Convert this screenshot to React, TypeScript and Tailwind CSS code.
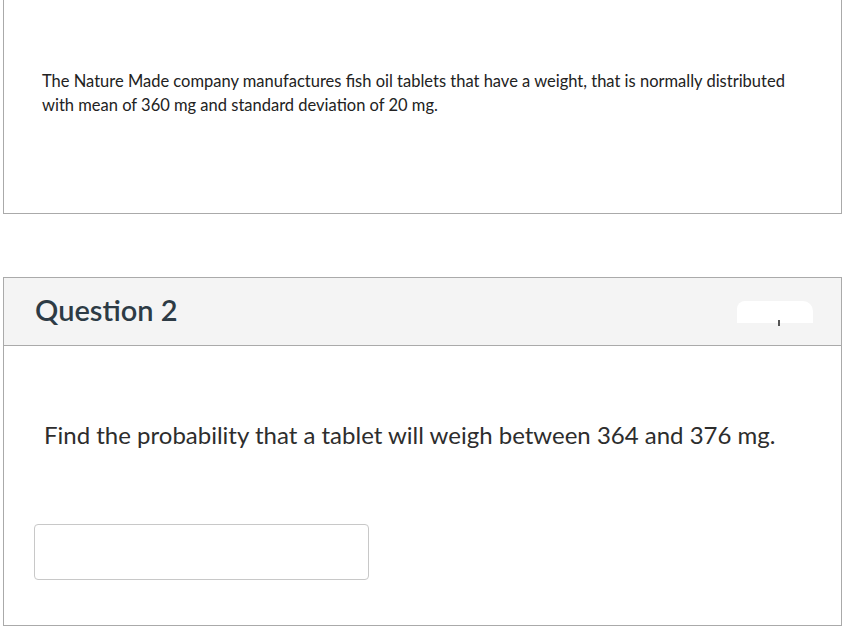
export default function App() {
  return (
    <div className="min-h-[634px] bg-white pl-[3px] pr-[2px] font-['Lato','Open_Sans',sans-serif]">
      {/* previous question body (top cut off) */}
      <div className="h-[214px] border-x border-b border-[#aaaaaa] pl-[38px] pr-[20px] pt-[69px]">
        <p className="whitespace-nowrap text-[16.5px] leading-[24px] text-[#222]">
          The Nature Made company manufactures fish oil tablets that have a weight, that is normally distributed
          <br />
          with mean of 360 mg and standard deviation of 20 mg.
        </p>
      </div>

      <div className="mt-[63px] h-[349px] border border-[#aaaaaa]">
        <div className="flex h-[68px] items-center justify-between border-b border-[#aaaaaa] bg-[#f4f4f4] pb-[4px] pl-[31px] pr-[28px]">
          <h2 className="text-[29px] font-semibold leading-none text-[#2d3b45]">Question 2</h2>
          <div className="relative mt-[4px] h-[22px] w-[76px]">
            <div className="absolute inset-0 rounded-tl-[8px] rounded-tr-[10px] bg-white" />
            <div className="absolute left-[41px] top-[19px] h-[6px] w-[2px] bg-[#555]" />
          </div>
        </div>
        <div className="pl-[40px] pt-[75px]">
          <p className="whitespace-nowrap text-[24px] leading-[28px] text-[#2d2d2d]">
            Find the probability that a tablet will weigh between 364 and 376 mg.
          </p>
          <input
            type="text"
            className="ml-[-10px] mt-[75px] h-[56px] w-[335px] rounded-[4px] border border-[#c8c8c8] bg-white outline-none"
          />
        </div>
      </div>
    </div>
  );
}
